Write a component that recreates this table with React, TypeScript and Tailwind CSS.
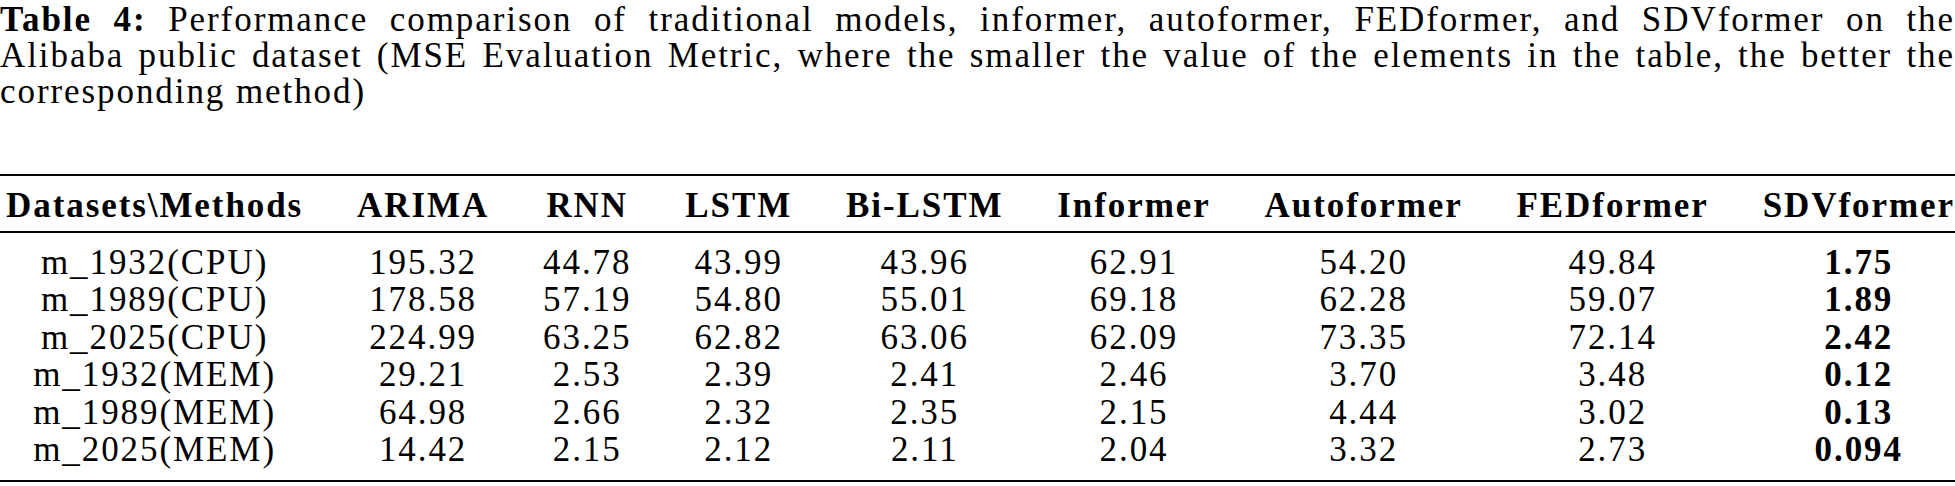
const methods = ["ARIMA", "RNN", "LSTM", "Bi-LSTM", "Informer", "Autoformer", "FEDformer", "SDVformer"]

const rows: [string, string[]][] = [
  ["m_1932(CPU)", ["195.32", "44.78", "43.99", "43.96", "62.91", "54.20", "49.84", "1.75"]],
  ["m_1989(CPU)", ["178.58", "57.19", "54.80", "55.01", "69.18", "62.28", "59.07", "1.89"]],
  ["m_2025(CPU)", ["224.99", "63.25", "62.82", "63.06", "62.09", "73.35", "72.14", "2.42"]],
  ["m_1932(MEM)", ["29.21", "2.53", "2.39", "2.41", "2.46", "3.70", "3.48", "0.12"]],
  ["m_1989(MEM)", ["64.98", "2.66", "2.32", "2.35", "2.15", "4.44", "3.02", "0.13"]],
  ["m_2025(MEM)", ["14.42", "2.15", "2.12", "2.11", "2.04", "3.32", "2.73", "0.094"]],
]

export default function App() {
  return (
    <div className="w-[1955px] h-[486px] bg-white text-black font-['Liberation_Serif',serif] text-[35px] tracking-[0.055em] overflow-hidden">
      {/* caption */}
      <div className="pt-[2px] leading-[36px]">
        <div className="text-justify [text-align-last:justify]">
          <span className="font-bold">Table 4:</span> Performance comparison of traditional models, informer, autoformer, FEDformer, and SDVformer on the
        </div>
        <div className="text-justify [text-align-last:justify]">
          Alibaba public dataset (MSE Evaluation Metric, where the smaller the value of the elements in the table, the better the
        </div>
        <div>corresponding method)</div>
      </div>

      {/* table */}
      <div className="mt-[64px] grid grid-cols-[repeat(9,auto)] justify-between leading-[37.4px]">
        <div className="col-span-9 h-[2px] bg-black mb-[11px]" />
        <div className="font-bold whitespace-nowrap pl-[6px]">Datasets\Methods</div>
        {methods.map((m) => (
          <div key={m} className="font-bold text-center whitespace-nowrap">{m}</div>
        ))}
        <div className="col-span-9 h-[1.5px] bg-black mt-[7px] mb-[11px]" />
        {rows.map(([name, vals]) => (
          <div key={name} className="contents">
            <div className="text-center whitespace-nowrap pl-[6px]">{name}</div>
            {vals.map((v, i) => (
              <div key={i} className={`text-center whitespace-nowrap ${i === 7 ? "font-bold" : ""}`}>{v}</div>
            ))}
          </div>
        ))}
        <div className="col-span-9 h-[2px] bg-black mt-[12px]" />
      </div>
    </div>
  )
}
